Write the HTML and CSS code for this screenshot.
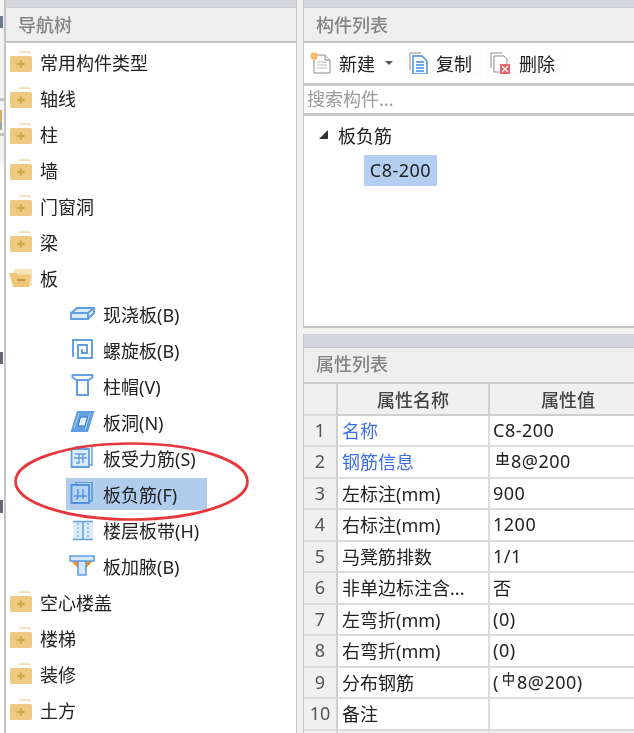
FILE: index.html
```html
<!DOCTYPE html>
<html lang="zh-CN">
<head>
<meta charset="utf-8">
<title>导航树 / 构件列表</title>
<link rel="stylesheet" href="styles.css">
</head>
<body>
<svg width="0" height="0" class="defs">
  <symbol id="folder" viewBox="0 0 24 22">
    <path d="M11 2.500q0-1.500 1.500-1.500h7q1.500 0 1.500 1.500" fill="none" stroke="#f1d9a3" stroke-width="1.600"/>
    <rect x="1" y="5" width="22" height="16" rx="1.500" fill="#eecb80"/>
    <path d="M12 9.500v7M8.500 13h7" stroke="#d4a84e" stroke-width="2.400"/>
  </symbol>
</svg>
<div class="screen">
  <div class="edge">
    <i class="bit bit-a"></i><i class="band band-a"></i><i class="bit bit-b"></i><i class="band band-b"></i><i class="bit bit-c"></i>
    <i class="bit bit-d"></i><i class="bit bit-e"></i>
  </div>

  <section class="panel nav">
    <div class="topbar"></div>
    <h2 class="title">导航树</h2>
    <ul class="tree">
      <li class="node"><svg class="folder"><use href="#folder"/></svg>常用构件类型</li>
      <li class="node"><svg class="folder"><use href="#folder"/></svg>轴线</li>
      <li class="node"><svg class="folder"><use href="#folder"/></svg>柱</li>
      <li class="node"><svg class="folder"><use href="#folder"/></svg>墙</li>
      <li class="node"><svg class="folder"><use href="#folder"/></svg>门窗洞</li>
      <li class="node"><svg class="folder"><use href="#folder"/></svg>梁</li>
      <li class="node">
        <svg class="folder" viewBox="0 0 24 22">
          <path d="M5 2h18v17H5z" fill="#f6e3b8"/>
          <path d="M0 6h7l2 1.500h13L20 20H4z" fill="#eec878"/>
          <path d="M8 13h8" stroke="#c9993f" stroke-width="2.200"/>
        </svg>板
      </li>
      <li class="leaf">
        <svg class="leaf-icon" viewBox="0 0 26 24" fill="#dcebfa" stroke="#5f9fe2" stroke-width="1.900">
          <path d="M2 11l6-5h17v5l-6 6H2z"/><path d="M2 11h17l6-5M19 11v6" fill="none"/>
        </svg>现浇板(B)
      </li>
      <li class="leaf">
        <svg class="leaf-icon" viewBox="0 0 26 24" fill="none" stroke="#5f9fe2" stroke-width="1.900">
          <path d="M4 19V2h19v18H9V7h9v8h-5v-4"/>
        </svg>螺旋板(B)
      </li>
      <li class="leaf">
        <svg class="leaf-icon" viewBox="0 0 26 24" fill="#fff" stroke="#5f9fe2" stroke-width="2">
          <path d="M3.500 1h20v2.500l-4 2.500h-12l-4-2.500z"/><path d="M8 6h11v15H8z"/>
        </svg>柱帽(V)
      </li>
      <li class="leaf">
        <svg class="leaf-icon" viewBox="0 0 26 24">
          <path d="M1.500 22L8 1h17.500L19 22z" fill="#5f9fe2"/>
          <path d="M9 16l2.500-9h7L16 16z" fill="#e3effb" stroke="#2f73c4"/>
          <path d="M5 19L10 3M21 3l-5 17" stroke="#bcd7f3" stroke-width=".8"/>
        </svg>板洞(N)
      </li>
      <li class="leaf">
        <svg class="leaf-icon" viewBox="0 0 26 24" fill="none" stroke="#5f9fe2" stroke-width="1.400">
          <path d="M7 3V0h16v19h-3"/>
          <path d="M2.500 3h17.500v18H2.500z" fill="#dcebfa" stroke-width="1.800"/>
          <path d="M6 8h11M5 12h13M10 8v9h-3M14 8v9"/>
        </svg>板受力筋(S)
      </li>
      <li class="leaf selected">
        <svg class="leaf-icon" viewBox="0 0 26 24" fill="none" stroke="#4f92de" stroke-width="1.400">
          <path d="M7 3V0h16v19h-3"/>
          <path d="M2.500 3h17.500v18H2.500z" fill="#b9d4f2" stroke-width="1.800"/>
          <path d="M5 14h13M9 7v7c0 2-1 3-2 3M14 7v10"/>
        </svg>板负筋(F)
      </li>
      <li class="leaf">
        <svg class="leaf-icon" viewBox="0 0 26 24" fill="#dcebfa">
          <path d="M4 4h20v17H4z"/>
          <path d="M4 3.500h20M4 21.500h20M14 4v17" stroke="#5f9fe2" stroke-width="1.500"/>
          <path d="M9 5v15M19 5v15" stroke="#5f9fe2" stroke-dasharray="2 2"/>
        </svg>楼层板带(H)
      </li>
      <li class="leaf">
        <svg class="leaf-icon" viewBox="0 0 26 24">
          <path d="M2 7h22l-7 7v-7H9v7z" fill="#ff8c1a"/>
          <path d="M9 7h8v14H9z" fill="#d6e8fa" stroke="#5f9fe2" stroke-width="1.600"/>
          <path d="M1 2h24v5H1z" fill="#d6e8fa" stroke="#5f9fe2" stroke-width="1.600"/>
        </svg>板加腋(B)
      </li>
      <li class="node"><svg class="folder"><use href="#folder"/></svg>空心楼盖</li>
      <li class="node"><svg class="folder"><use href="#folder"/></svg>楼梯</li>
      <li class="node"><svg class="folder"><use href="#folder"/></svg>装修</li>
      <li class="node"><svg class="folder"><use href="#folder"/></svg>土方</li>
    </ul>
    <svg class="ring" width="240" height="84" viewBox="0 0 240 84">
      <ellipse cx="117.500" cy="41.500" rx="116" ry="38" fill="none" stroke="#e8373c" stroke-width="2.700"/>
    </svg>
  </section>

  <div class="side">
    <section class="panel list">
      <div class="topbar"></div>
      <h2 class="title">构件列表</h2>
      <div class="toolbar">
        <span class="tool tool-new">
          <svg class="tool-icon" viewBox="0 0 22 22">
            <path d="M4 3h11l5 5v13H4z" fill="#fff" stroke="#8d8d8d"/>
            <path d="M15 3v5h5" fill="#eee" stroke="#8d8d8d"/>
            <path d="M7 10h10M7 13h10M7 16h10" stroke="#bdbdbd"/>
            <circle cx="4" cy="4" r="3.500" fill="#f6a93b"/>
            <path d="M4 1v6M1 4h6" stroke="#ffe2ae"/>
          </svg>新建
          <i class="caret"></i>
        </span>
        <span class="tool tool-btn tool-copy">
          <svg class="tool-icon" viewBox="0 0 22 22">
            <path d="M2 18V1h11" fill="none" stroke="#8d8d8d"/>
            <path d="M5 4h9l5 5v13H5z" fill="#fff" stroke="#3e8ce0" stroke-width="1.400"/>
            <path d="M8 10h8M8 13h8M8 16h8M8 19h8" stroke="#3e8ce0" stroke-width="1.300"/>
          </svg>复制
        </span>
        <span class="tool tool-btn tool-del">
          <svg class="tool-icon" viewBox="0 0 22 22">
            <path d="M2 16V1h11" fill="none" stroke="#8d8d8d"/>
            <path d="M5 4h10l3 3v6M11 20H5V4" fill="#fff" stroke="#8d8d8d"/>
            <rect x="11" y="12" width="10" height="10" fill="#e0646a"/>
            <path d="M13 14l6 6M19 14l-6 6" stroke="#fff" stroke-width="1.200"/>
          </svg>删除
        </span>
      </div>
      <div class="search">搜索构件...</div>
      <div class="parts">
        <div class="part-group"><i class="twist"></i>板负筋</div>
        <div class="part-row"><span class="part-item">C8-200</span></div>
      </div>
    </section>

    <section class="panel props">
      <div class="topbar short"></div>
      <h2 class="title props-title">属性列表</h2>
      <div class="table">
        <div class="cell num"></div><div class="cell head">属性名称</div><div class="cell head">属性值</div>
        <div class="cell num">1</div><div class="cell link">名称</div><div class="cell val">C8-200</div>
        <div class="cell num">2</div><div class="cell link">钢筋信息</div><div class="cell val"><svg class="rebar" viewBox="0 0 12 13" role="img" aria-label="三级钢"><path d="M1.500 3.500h9v5h-9zM6 0v11M0 11.500h12" fill="none" stroke="#222" stroke-width="1.300"/></svg>8@200</div>
        <div class="cell num">3</div><div class="cell">左标注(mm)</div><div class="cell val">900</div>
        <div class="cell num">4</div><div class="cell">右标注(mm)</div><div class="cell val">1200</div>
        <div class="cell num">5</div><div class="cell">马凳筋排数</div><div class="cell val">1/1</div>
        <div class="cell num">6</div><div class="cell">非单边标注含...</div><div class="cell val">否</div>
        <div class="cell num">7</div><div class="cell">左弯折(mm)</div><div class="cell val">(0)</div>
        <div class="cell num">8</div><div class="cell">右弯折(mm)</div><div class="cell val">(0)</div>
        <div class="cell num">9</div><div class="cell">分布钢筋</div><div class="cell val">(<svg class="rebar" viewBox="0 0 12 13" role="img" aria-label="一级钢"><path d="M1.500 3.500h9v5h-9zM6 0v13" fill="none" stroke="#333" stroke-width="1.200"/></svg>8@200)</div>
        <div class="cell num">10</div><div class="cell">备注</div><div class="cell val"></div>
        <div class="cell num"></div><div class="cell blank"></div><div class="cell blank"></div>
      </div>
    </section>
  </div>
</div>
</body>
</html>
```
FILE: styles.css
```css
* { box-sizing: border-box; }
html, body { margin: 0; padding: 0; height: 733px; overflow: hidden; background: #f0f0f0; }
.defs { position: absolute; }
.screen {
  display: flex;
  width: 634px;
  height: 733px;
  overflow: hidden;
  font-family: "Noto Sans", "Noto Sans CJK SC", sans-serif;
  font-size: 18px;
  color: #222;
  filter: blur(0.4px);
}
.edge {
  position: relative;
  flex: 0 0 6px;
  background: linear-gradient(#f3f3f3 165px, #fff 165px);
  border-right: 2px solid #c2c4ca;
  overflow: hidden;
}
.bit, .band { position: absolute; left: 0; display: block; }
.band { width: 4px; background: #c4c4c4; height: 3px; }
.band-a { top: 98px; }
.band-b { top: 133px; }
.bit { width: 3px; background: #667; }
.bit-a { top: 16px; height: 12px; width: 3px; background: #6b7c8e; }
.bit-b { top: 110px; height: 14px; width: 2px; background: #d6ad70; }
.bit-c { top: 122px; height: 8px; width: 2px; background: #a0a5aa; }
.bit-d { top: 352px; height: 12px; }
.bit-e { top: 500px; height: 13px; }

.panel { background: #fff; }
.nav {
  position: relative;
  flex: 0 0 291px;
  border-right: 1px solid #c4c4c4;
}
.topbar { height: 8px; background: #d3d5da; border-bottom: 1px solid #c9cbd0; }
.topbar.short { height: 14px; }
.title {
  margin: 0;
  height: 35px;
  padding-left: 12px;
  background: #eeeeee;
  border-bottom: 2px solid #c6c6c6;
  font-size: 18px;
  font-weight: 500;
  line-height: 34px;
  color: #848484;
}
.tree { list-style: none; margin: 1px 0 0; padding: 0; }
.node, .leaf { display: flex; align-items: center; height: 36px; white-space: nowrap; }
.node { padding-left: 3px; }
.folder { flex: 0 0 24px; width: 24px; height: 22px; margin-right: 7px; }
.leaf { padding-left: 63px; }
.leaf-icon { flex: 0 0 26px; width: 26px; height: 24px; margin-right: 8px; }
.selected { width: 141px; margin: 2px 0 2px 60px; padding-left: 3px; height: 32px; background: #b0cdee; }
.ring { position: absolute; left: 8px; top: 440px; }

.side {
  flex: 1;
  min-width: 0;
  padding-left: 6px;
  background: #f0f0f0;
  display: flex;
  flex-direction: column;
}
.list { flex: 0 0 328px; border-left: 1px solid #c4c4c4; border-bottom: 2px solid #c4c4c4; display: flex; flex-direction: column; }
.toolbar { display: flex; align-items: center; height: 40px; padding-left: 6px; }
.tool { display: flex; align-items: center; height: 30px; white-space: nowrap; }
.tool-new { width: 94px; }
.tool-btn { width: 78px; padding: 0 8px 0 4px; margin-right: 3px; background: #fdfdfd; border-radius: 4px; }
.tool-icon { flex: 0 0 22px; width: 22px; height: 22px; margin-right: 7px; }
.tool-copy .tool-icon { margin-right: 6px; }
.tool-del .tool-icon { margin-right: 8px; }
.caret { margin-left: 10px; border: 4px solid transparent; border-top: 4px solid #555; border-bottom: 0; }
.search {
  height: 33px;
  padding-left: 3px;
  border-top: 3px solid #c8c8c8;
  border-bottom: 3px solid #c8c8c8;
  line-height: 26px;
  color: #9a9a9a;
  white-space: nowrap;
}
.parts { flex: 1; }
.part-group { display: flex; align-items: center; height: 37px; margin-bottom: 2px; padding-left: 15px; }
.twist { width: 0; height: 0; margin-right: 10px; border-style: solid; border-width: 0 0 9px 9px; border-color: transparent transparent #333; }
.part-row { padding-left: 60px; display: flex; }
.part-item { display: block; width: 73px; height: 31px; line-height: 31px; text-align: center; letter-spacing: .5px; background: #b3cef0; }

.props { flex: 1; margin-top: 6px; border-left: 1px solid #c4c4c4; min-height: 0; }
.props-title { height: 34px; border-bottom: 0; line-height: 32px; }
.table {
  display: grid;
  grid-template-columns: 34px 152px 158px;
  grid-auto-rows: 31.5px;
  border-top: 2px solid #c9c9c9;
}
.cell {
  display: flex;
  align-items: center;
  padding-left: 4px;
  padding-bottom: 1px;
  border-right: 2px solid #dcdcdc;
  border-bottom: 2px solid #dcdcdc;
  white-space: nowrap;
  overflow: hidden;
}
.val { padding-left: 3px; letter-spacing: .5px; }
.num { justify-content: center; padding: 0 0 1px; background: #f0f0f0; color: #555; border-right-color: #cfcfcf; }
.head { justify-content: center; padding: 0; background: #f0f0f0; color: #444; font-weight: 500; border-right-color: #cfcfcf; border-bottom-color: #cfcfcf; }
.link { color: #3f6fe8; }
.blank { background: #ededed; }
.rebar { width: 13px; height: 14px; margin: 0 2px 5px 3px; flex: 0 0 13px; }
```
